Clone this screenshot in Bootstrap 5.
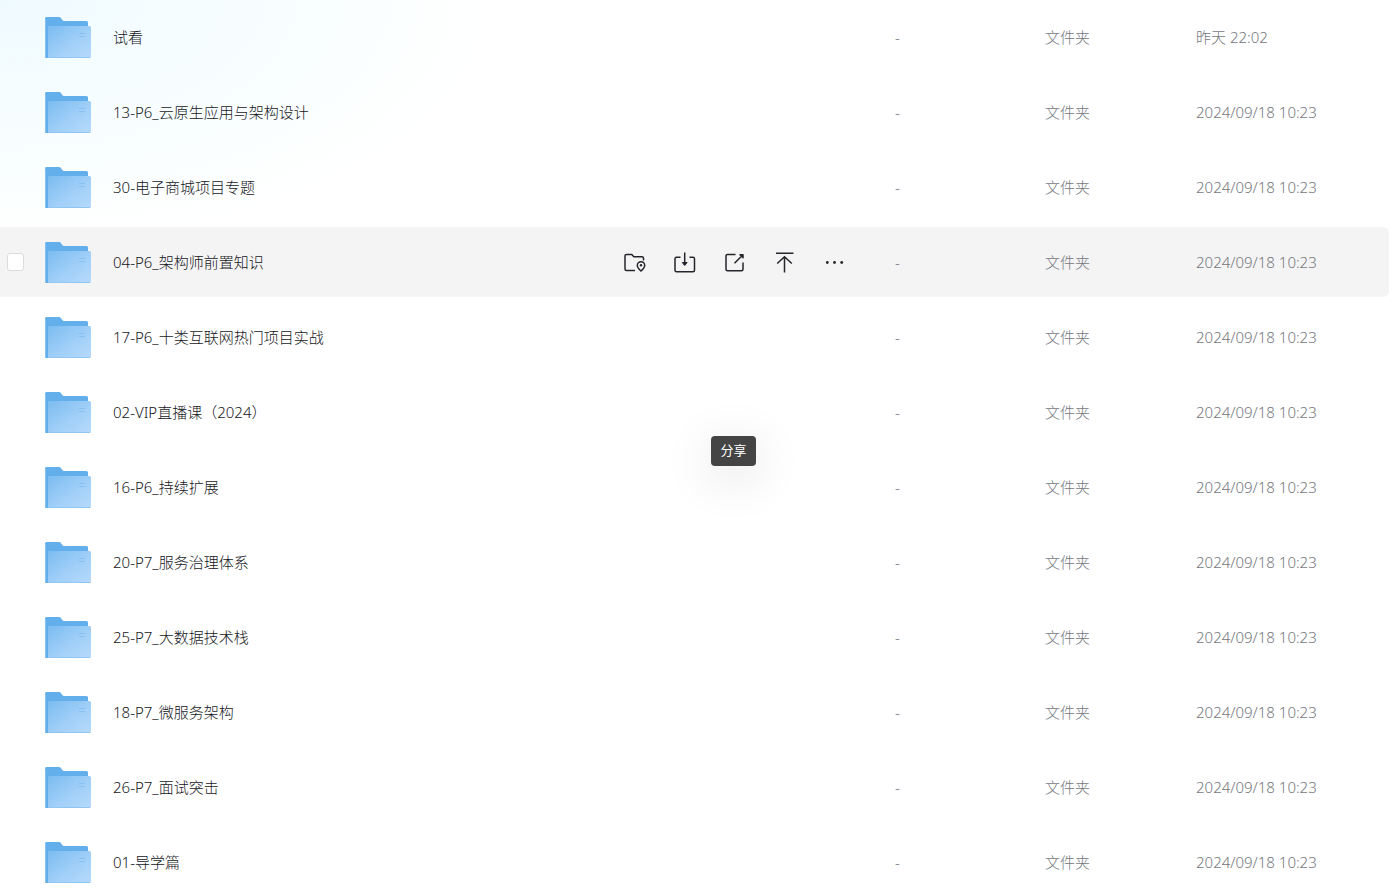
<!DOCTYPE html>
<html lang="zh-CN">
<head>
<meta charset="utf-8">
<meta name="viewport" content="width=device-width, initial-scale=1">
<title>文件列表</title>
<link href="https://cdn.jsdelivr.net/npm/bootstrap@5.3.0/dist/css/bootstrap.min.css" rel="stylesheet">
<style>
body { font-family: "Noto Sans", "Noto Sans CJK SC", sans-serif; font-size: 15px; font-weight: 300; line-height: 24px; color: #25262b; background: #fff; }
.file-page { padding-right: 8px; background: radial-gradient(ellipse 500px 250px at 0 0, #effaff 0, #f8feff 55%, #fff 100%) no-repeat; }
.file-table { table-layout: fixed; border-collapse: separate; border-spacing: 0 5px; margin-top: -3px; }
.file-table td { height: 70px; padding: 0; vertical-align: middle; }
.file-table .is-hover td { background: #f4f4f4; }
.file-table .is-hover td:last-child { border-radius: 0 6px 6px 0; }
.col-check { width: 45px; }
.col-size { width: 150px; }
.col-type { width: 151px; }
.col-date { width: 193px; }
.file-meta { color: #75777e; }
.file-link { color: #16171c; padding-left: 22px; }
.folder-icon { width: 46px; height: 44px; }
.file-table .form-check-input { width: 17px; height: 18px; margin: 0 0 0 7px; border-color: #dcdcdc; border-radius: 3px; }
.file-actions { padding-right: 35px; }
.action-btn { width: 50px; height: 32px; color: #25262b; padding: 0; }
.action-btn svg { width: 24px; height: 24px; display: block; margin: auto; }
.share-tip { left: 1px; top: 190px; width: 45px; height: 30px; border-radius: 4px; background: #444; color: #fff; font-size: 13px; font-weight: 400; line-height: 28px; text-align: center; box-shadow: 0 10px 50px rgba(0,0,0,.14); }
</style>
</head>
<body>
<svg width="0" height="0" class="position-absolute" aria-hidden="true">
<defs>
<linearGradient id="front" x1="0" y1="0" x2="1" y2="1"><stop offset="0" stop-color="#7bbcf0"/><stop offset=".55" stop-color="#a0cff8"/><stop offset="1" stop-color="#b7dafc"/></linearGradient>
<symbol id="folder" viewBox="0 0 46 44">
<g transform="translate(0 2)">
<path d="M0 1.5Q0 0 1.500 0H14Q15.300 0 16 1.200L17.500 3.200Q18 4 19 4H41.500Q43 4 43 5.500V41H0Z" fill="#63afec"/>
<path d="M.5 2V41" stroke="#85c1f2"/>
<path d="M3 9H44.500Q46 9 46 10.500V39.500Q46 41 44.500 41H3Z" fill="url(#front)"/>
<path d="M3 40.500H45" stroke="#91c5f2"/>
<path d="M34 16.500H40M34 19.500H40" stroke="#85c1f2"/>
</g>
</symbol>
</defs>
</svg>
<main class="file-page vh-100 overflow-hidden">
<table class="file-table w-100">
<colgroup><col class="col-check"><col><col class="col-size"><col class="col-type"><col class="col-date"></colgroup>
<tbody id="files"></tbody>
</table>
</main>
<template id="actions">
<div class="file-actions d-flex ms-auto">
<button type="button" class="btn border-0 action-btn" aria-label="定位文件夹"><svg viewBox="0 0 24 24" fill="none" stroke="currentColor" stroke-width="1.500"><path d="M12 20.500H3.500Q2 20.500 2 19V6Q2 4.500 3.500 4.500H8.800L10.800 6.800H19Q20.500 6.800 20.500 8.300V10.500"/><path d="M18 21C16 19.200 14.300 17.600 14.300 15.400A3.700 3.700 0 0 1 21.700 15.400C21.700 17.600 20 19.200 18 21Z"/><circle cx="18" cy="15.200" r="1.200" fill="currentColor" stroke="none"/></svg></button>
<button type="button" class="btn border-0 action-btn" aria-label="下载"><svg viewBox="0 0 24 24" fill="none" stroke="currentColor" stroke-width="1.500"><path d="M7.500 7.200H3.500Q2 7.200 2 8.700V20.200Q2 21.700 3.500 21.700H20Q21.500 21.700 21.500 20.200V8.700Q21.500 7.200 20 7.200H16.500M11.700 2.500V13.500"/><path d="M9.300 12.500H14.100L11.700 15.500Z" fill="currentColor" stroke-width="1" stroke-linejoin="round"/></svg></button>
<div class="position-relative">
<button type="button" class="btn border-0 action-btn" aria-label="分享" aria-describedby="share-tip"><svg viewBox="0 0 24 24" fill="none" stroke="currentColor" stroke-width="1.500"><path d="M12.500 4.500H4.500Q3 4.500 3 6V19.200Q3 20.700 4.500 20.700H18.500Q20 20.700 20 19.200V12.500M11.500 13.300L18 6.700"/><path d="M17 4.800H20V7.800Z" fill="currentColor" stroke-linejoin="round"/></svg></button>
<div id="share-tip" class="share-tip position-absolute" role="tooltip">分享</div>
</div>
<button type="button" class="btn border-0 action-btn" aria-label="置顶"><svg viewBox="0 0 24 24" fill="none" stroke="currentColor" stroke-width="1.500"><path d="M3 3.300H20.500M11.500 22.500V6.500M4.200 13.500L11.500 6.700L18.800 13.500"/></svg></button>
<button type="button" class="btn border-0 action-btn" aria-label="更多"><svg viewBox="0 0 24 24" fill="currentColor"><circle cx="4.300" cy="12.500" r="1.400"/><circle cx="11.500" cy="12.500" r="1.400"/><circle cx="18.700" cy="12.500" r="1.400"/></svg></button>
</div>
</template>
<script src="https://cdn.jsdelivr.net/npm/bootstrap@5.3.0/dist/js/bootstrap.bundle.min.js"></script>
<script>
const names = ["试看", "13-P6_云原生应用与架构设计", "30-电子商城项目专题", "04-P6_架构师前置知识", "17-P6_十类互联网热门项目实战", "02-VIP直播课（2024）", "16-P6_持续扩展", "20-P7_服务治理体系", "25-P7_大数据技术栈", "18-P7_微服务架构", "26-P7_面试突击", "01-导学篇"];
const hovered = 3;
document.getElementById("files").innerHTML = names.map((name, i) => `
<tr class="${i === hovered ? "is-hover" : ""}">
<td>${i === hovered ? `<input class="form-check-input d-block" type="checkbox" aria-label="选择 ${name}">` : ""}</td>
<td><div class="d-flex align-items-center"><svg class="folder-icon flex-shrink-0" aria-hidden="true"><use href="#folder"/></svg><a href="#" class="file-link text-decoration-none text-nowrap">${name}</a>${i === hovered ? document.getElementById("actions").innerHTML : ""}</div></td>
<td class="file-meta">-</td>
<td class="file-meta">文件夹</td>
<td class="file-meta">${i === 0 ? "昨天 22:02" : "2024/09/18 10:23"}</td>
</tr>`).join("");
</script>
</body>
</html>
